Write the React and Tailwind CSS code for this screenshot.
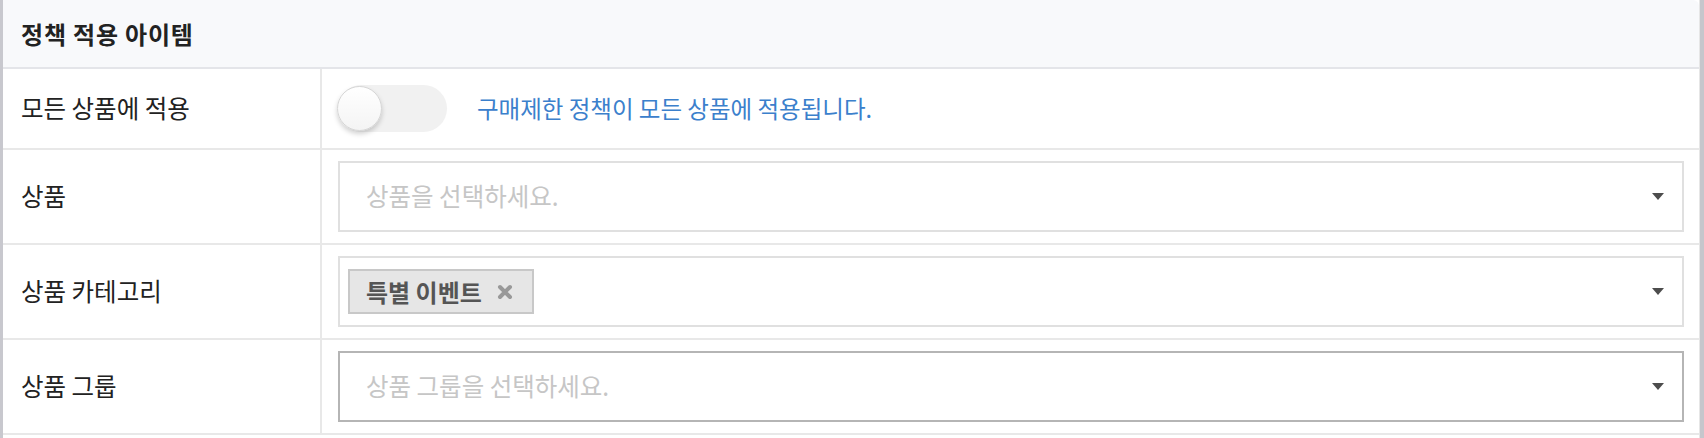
import { useState } from 'react'

const font = { fontFamily: '"Noto Sans CJK KR", "Noto Sans", sans-serif' }

const Caret = () => (
	<svg width="12" height="7" viewBox="0 0 12 7" className="shrink-0">
		<path d="M0 0 L12 0 L6 7 Z" fill="#4d4d4d" />
	</svg>
)

const Row = ({ label, tall, children }) => (
	<div className={`flex border-b-2 border-[#e8e8e8] ${tall ? 'h-[95px]' : 'h-[81px]'}`}>
		<div className="w-[319px] shrink-0 border-r-2 border-[#e8e8e8] flex items-center pl-[18px] text-[24.5px] text-[#222]">
			{label}
		</div>
		<div className="flex-1 flex items-center pl-[16px] pr-[15px]">{children}</div>
	</div>
)

const SelectBox = ({ placeholder, focused, children }) => (
	<div
		className={`flex-1 h-[71px] border-2 bg-white flex items-center justify-between pr-[18px] ${
			focused ? 'border-[#b5b5b5]' : 'border-[#e0e0e0]'
		}`}
	>
		{children ? (
			<div className="pl-[8px] flex items-center">{children}</div>
		) : (
			<span className="pl-[26px] text-[24.5px] text-[#c6c6c6]">{placeholder}</span>
		)}
		<Caret />
	</div>
)

export default function App() {
	const [allItems, setAllItems] = useState(false)

	return (
		<div className="w-[1704px] h-[438px] bg-white flex" style={font}>
			<div className="w-[3px] bg-[#c8c8ce]" />
			<div className="flex-1 border-r border-[#e6e6e6]">
				{/* Header */}
				<div className="h-[69px] bg-[#f8f9fb] border-b-2 border-[#e4e5e9] rounded-tr-[6px] flex items-center pl-[18px]">
					<h2 className="text-[24px] font-bold text-[#222] tracking-[0.8px]">정책 적용 아이템</h2>
				</div>

				<Row label="모든 상품에 적용">
					<button
						type="button"
						onClick={() => setAllItems(!allItems)}
						className="relative w-[109px] h-[47px] rounded-full bg-[#f1f1f1] shrink-0"
					>
						<span className="absolute left-[-1px] top-[1px] w-[45px] h-[45px] rounded-full bg-gradient-to-b from-white to-[#f4f4f4] border border-[#d6d6d6] shadow-[0_3px_5px_rgba(0,0,0,0.18)]" />
					</button>
					<span className="ml-[30px] text-[23.5px] text-[#3b80cc]">구매제한 정책이 모든 상품에 적용됩니다.</span>
				</Row>

				<Row label="상품" tall>
					<SelectBox placeholder="상품을 선택하세요." />
				</Row>

				<Row label="상품 카테고리" tall>
					<SelectBox>
						<div className="h-[45px] border-2 border-[#c8c8c8] bg-[#e6e6e6] flex items-center pl-[16px] pr-[18px]">
							<span className="text-[24px] font-bold text-[#555]">특별 이벤트</span>
							<svg width="18" height="18" viewBox="0 0 18 18" className="ml-[14px]">
								<path d="M4 4 L14 14 M14 4 L4 14" stroke="#999" strokeWidth="4" strokeLinecap="round" />
							</svg>
						</div>
					</SelectBox>
				</Row>

				<Row label="상품 그룹" tall>
					<SelectBox placeholder="상품 그룹을 선택하세요." focused />
				</Row>
			</div>
			<div className="w-[4px] bg-[#c6c6cc]" />
		</div>
	)
}
